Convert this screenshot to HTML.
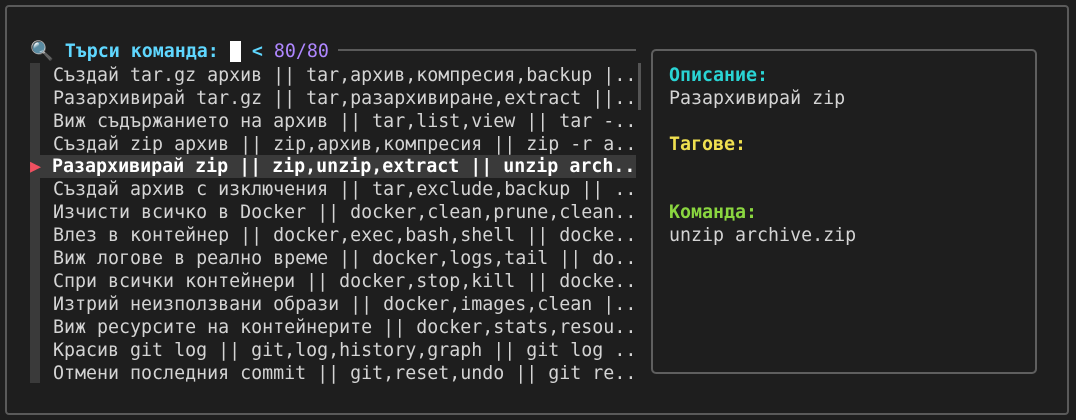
<!DOCTYPE html>
<html><head><meta charset="utf-8"><style>
html,body{margin:0;padding:0;background:#1e1e1e;width:1076px;height:420px;overflow:hidden}
body{position:relative;font-family:"DejaVu Sans Mono","Liberation Mono",monospace;font-size:18.3px;color:#d4d4d4}
.outer{position:absolute;left:5px;top:5px;width:1064px;height:410px;border:2px solid #5a5a5a;border-radius:4px;box-sizing:border-box}
.box{position:absolute;left:651px;top:49px;width:386px;height:325px;border:2px solid #5f5f5f;border-radius:5px;box-sizing:border-box}
.ln{position:absolute;white-space:pre;line-height:23px;height:23px}
.sb{position:absolute;left:30px;top:63px;width:10px;height:320px;background:#3a3a3a}
.sb2{position:absolute;left:638px;top:63px;width:3px;height:47px;background:#555}
.hl{position:absolute;left:40px;top:155px;width:596px;height:23px;background:#3a3a3a}
.hr{position:absolute;left:338px;top:49px;width:298px;height:2px;background:#5a5a5a}
b{font-weight:bold}
</style></head><body>
<div class="outer"></div>
<div class="box"></div>
<div class="hr"></div>
<div class="sb"></div>
<div class="sb2"></div>
<div class="hl"></div>
<div class="ln" style="left:30px;top:40px"><span style="font-size:19px">🔍</span> <b style="color:#5fd7ff">Търси команда:</b> <span style="background:#fff"> </span> <b style="color:#5fd7ff">&lt;</b> <span style="color:#af87ff">80/80</span></div>
<div class="ln" style="left:53px;top:64px">Създай tar.gz архив || tar,архив,компресия,backup |..</div>
<div class="ln" style="left:53px;top:87px">Разархивирай tar.gz || tar,разархивиране,extract ||..</div>
<div class="ln" style="left:53px;top:110px">Виж съдържанието на архив || tar,list,view || tar -..</div>
<div class="ln" style="left:53px;top:133px">Създай zip архив || zip,архив,компресия || zip -r a..</div>
<div class="ln" style="left:30px;top:155px"><span style="color:#f05060">▶</span> <b style="color:#fff">Разархивирай zip || zip,unzip,extract || unzip arch..</b></div>
<div class="ln" style="left:53px;top:178px">Създай архив с изключения || tar,exclude,backup || ..</div>
<div class="ln" style="left:53px;top:201px">Изчисти всичко в Docker || docker,clean,prune,clean..</div>
<div class="ln" style="left:53px;top:224px">Влез в контейнер || docker,exec,bash,shell || docke..</div>
<div class="ln" style="left:53px;top:247px">Виж логове в реално време || docker,logs,tail || do..</div>
<div class="ln" style="left:53px;top:270px">Спри всички контейнери || docker,stop,kill || docke..</div>
<div class="ln" style="left:53px;top:293px">Изтрий неизползвани образи || docker,images,clean |..</div>
<div class="ln" style="left:53px;top:316px">Виж ресурсите на контейнерите || docker,stats,resou..</div>
<div class="ln" style="left:53px;top:339px">Красив git log || git,log,history,graph || git log ..</div>
<div class="ln" style="left:53px;top:362px">Отмени последния commit || git,reset,undo || git re..</div>
<div class="ln" style="left:669px;top:64px;color:#2ad4d4"><b>Описание:</b></div>
<div class="ln" style="left:669px;top:87px">Разархивирай zip</div>
<div class="ln" style="left:669px;top:133px;color:#f0e050"><b>Тагове:</b></div>
<div class="ln" style="left:669px;top:201px;color:#8ad640"><b>Команда:</b></div>
<div class="ln" style="left:669px;top:224px">unzip archive.zip</div>
</body></html>
